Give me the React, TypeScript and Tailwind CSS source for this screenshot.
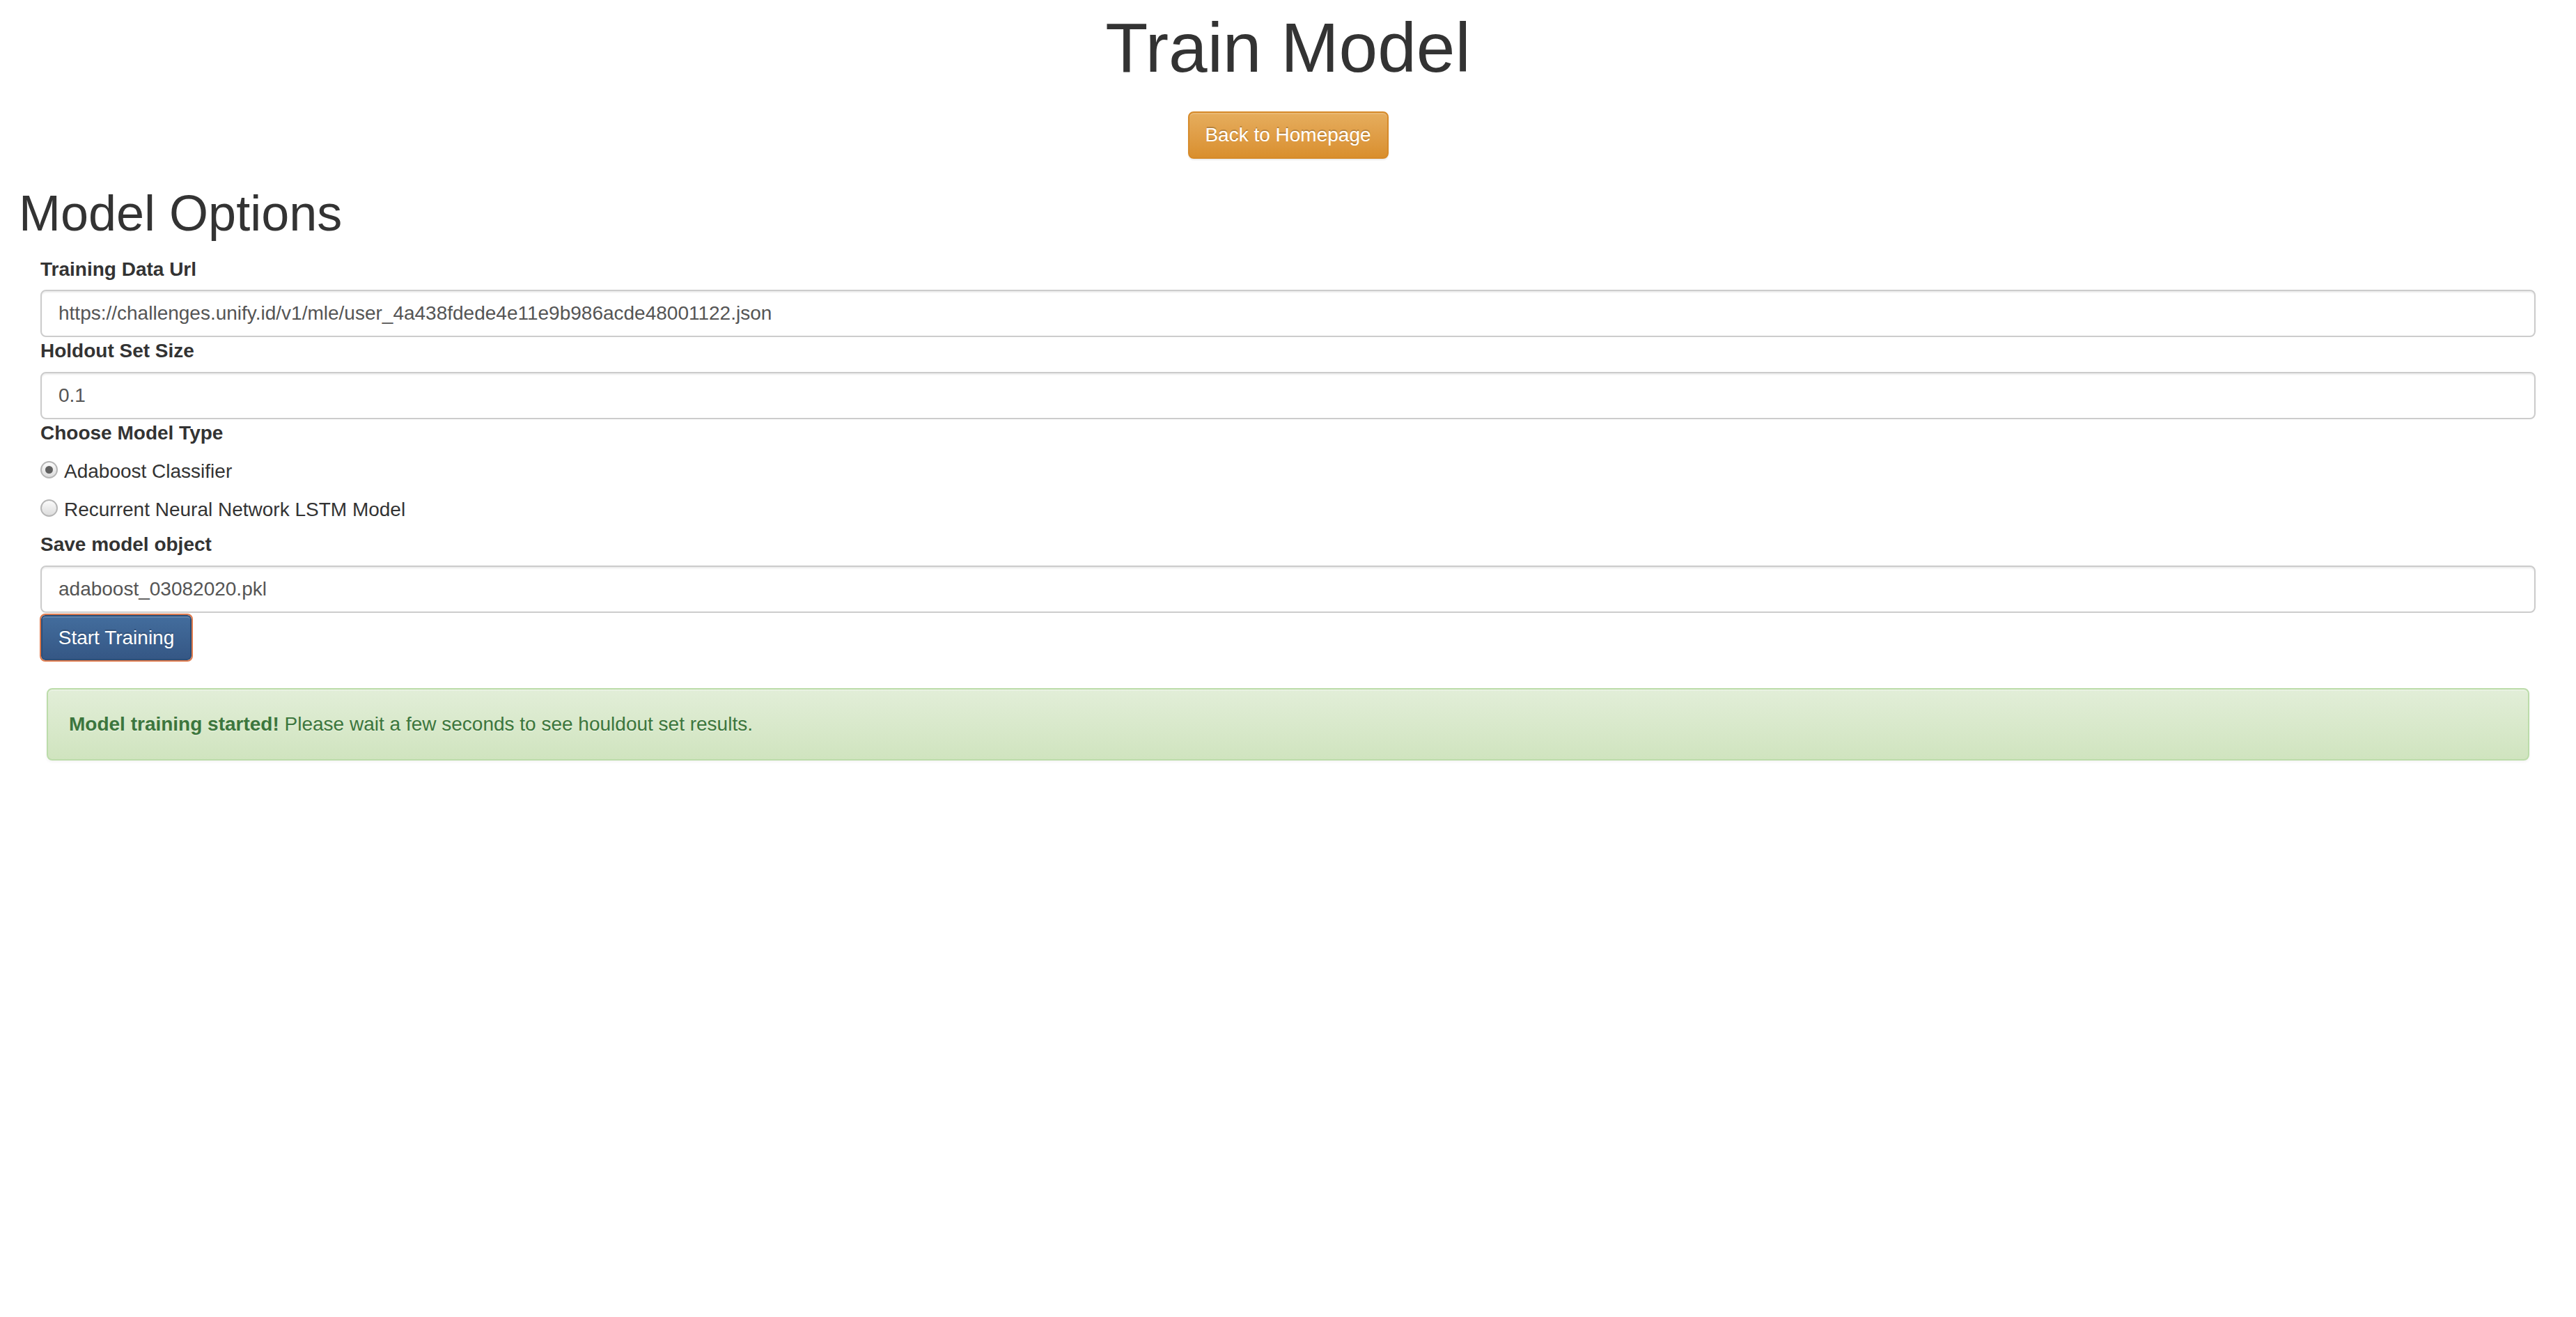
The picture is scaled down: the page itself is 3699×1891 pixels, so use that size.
import React from "react";

function Label({ children, className = "" }: { children: React.ReactNode; className?: string }) {
  return <label className={`block font-bold text-[28px] leading-[40px] text-[#333] ${className}`}>{children}</label>;
}

function TextInput({ value }: { value: string }) {
  return (
    <input
      type="text"
      readOnly
      value={value}
      className="block h-[68px] w-full rounded-[8px] border-2 border-[#cccccc] bg-white px-[24px] text-[28px] leading-[40px] text-[#555] shadow-[inset_0_2px_2px_rgba(0,0,0,0.075)] outline-none"
    />
  );
}

function Radio({ checked, label, className = "" }: { checked?: boolean; label: string; className?: string }) {
  return (
    <label className={`flex h-[40px] items-start ${className}`}>
      <span className="mt-[5px] flex h-[25px] w-[25px] shrink-0 items-center justify-center rounded-full border-2 border-[#b5b5b5] bg-linear-to-b from-[#fbfbfb] to-[#dcdcdc]">
        {checked ? <span className="h-[11px] w-[11px] rounded-full bg-[#5f5f5f]" /> : null}
      </span>
      <span className="ml-[9px] text-[28px] leading-[40px] text-[#333]">{label}</span>
    </label>
  );
}

export default function App() {
  return (
    <div className="min-h-screen w-full bg-white font-['Liberation_Sans',Arial,sans-serif] text-[28px] leading-[40px] text-[#333]">
      <h1 className="pt-[14px] text-center text-[100px] font-normal leading-[108px] text-[#333]">Train Model</h1>
      <div className="mt-[38px] flex justify-center">
        <button
          type="button"
          className="h-[68px] w-[288px] rounded-[8px] border-2 border-[#d68a2a] bg-linear-to-b from-[#e6ad5d] to-[#d98f2d] text-[28px] leading-[40px] text-white [text-shadow:0_-2px_0_rgba(0,0,0,0.2)] shadow-[inset_0_2px_0_rgba(255,255,255,0.15),0_2px_2px_rgba(0,0,0,0.075)]"
        >
          Back to Homepage
        </button>
      </div>
      <h2 className="mt-[39px] mb-[21px] pl-[27px] text-[72px] font-normal leading-[79px] text-[#333]">Model Options</h2>
      <form className="px-[58px]" onSubmit={(e) => e.preventDefault()}>
        <Label className="mb-[9px]">Training Data Url</Label>
        <TextInput value="https://challenges.unify.id/v1/mle/user_4a438fdede4e11e9b986acde48001122.json" />
        <Label className="mb-[10px]">Holdout Set Size</Label>
        <TextInput value="0.1" />
        <Label>Choose Model Type</Label>
        <Radio checked label="Adaboost Classifier" className="mt-[15px]" />
        <Radio label="Recurrent Neural Network LSTM Model" className="mt-[15px]" />
        <Label className="mt-[10px] mb-[10px]">Save model object</Label>
        <TextInput value="adaboost_03082020.pkl" />
        <button
          type="submit"
          className="mt-[3px] ml-[1px] h-[65px] w-[216px] rounded-[6px] border-2 border-[#2b4e78] bg-linear-to-b from-[#436d9d] to-[#355785] text-[28px] leading-[40px] text-white outline-2 outline-solid outline-[#df7a4c] [text-shadow:0_-2px_0_rgba(0,0,0,0.2)] shadow-[inset_0_2px_0_rgba(255,255,255,0.15)]"
        >
          Start Training
        </button>
      </form>
      <div className="mx-[67px] mt-[40px] rounded-[8px] border-2 border-[#bcdcaa] bg-linear-to-b from-[#e2eed8] to-[#d0e4bf] px-[30px] py-[30px] text-[28px] leading-[40px] text-[#3c763d] [text-shadow:0_2px_0_rgba(255,255,255,0.2)] shadow-[inset_0_2px_0_rgba(255,255,255,0.25),0_2px_4px_rgba(0,0,0,0.05)]">
        <strong className="font-bold">Model training started!</strong> Please wait a few seconds to see houldout set results.
      </div>
    </div>
  );
}
